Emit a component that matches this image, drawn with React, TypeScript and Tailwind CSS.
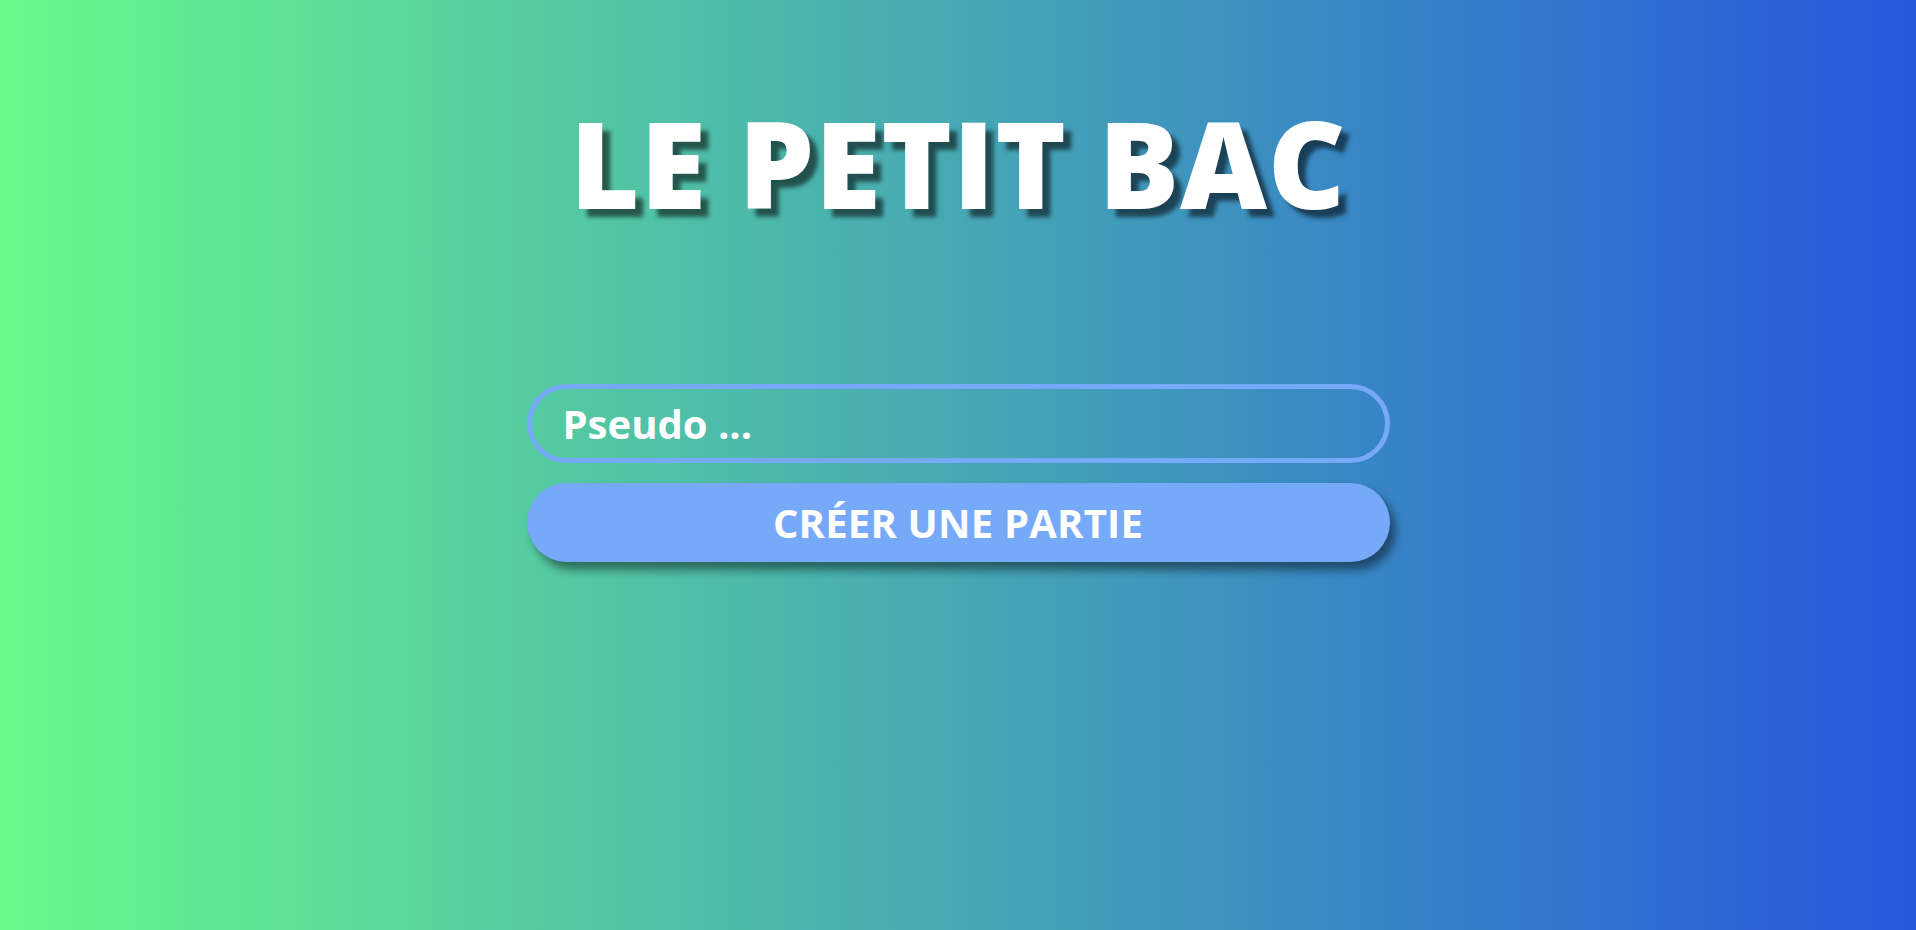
export default function App() {
  return (
    <div
      className="w-full min-h-screen flex flex-col items-center bg-[linear-gradient(to_right,#68f98a,#2557dd)] text-white"
      style={{ fontFamily: "'Open Sans', Lato, sans-serif" }}
    >
      <h1 className="pt-[103px] text-[120px] leading-none font-extrabold tracking-[0.005em] [text-shadow:8px_8px_4px_rgba(0,0,0,0.55)]">
        LE PETIT BAC
      </h1>

      <form className="mt-[161px] w-[863px] flex flex-col gap-[20px]">
        <input
          type="text"
          placeholder="Pseudo ..."
          className="h-[79px] w-full rounded-full border-[5px] border-[#76aaf8] bg-transparent px-[31px] text-[40px] font-bold text-white placeholder:text-white outline-none"
        />
        <button
          type="button"
          className="h-[79px] w-full rounded-full bg-[#76aaf9] text-[40px] font-bold uppercase tracking-[0.005em] text-white shadow-[6px_8px_10px_rgba(0,0,0,0.45)]"
        >
          Créer une partie
        </button>
      </form>
    </div>
  )
}
